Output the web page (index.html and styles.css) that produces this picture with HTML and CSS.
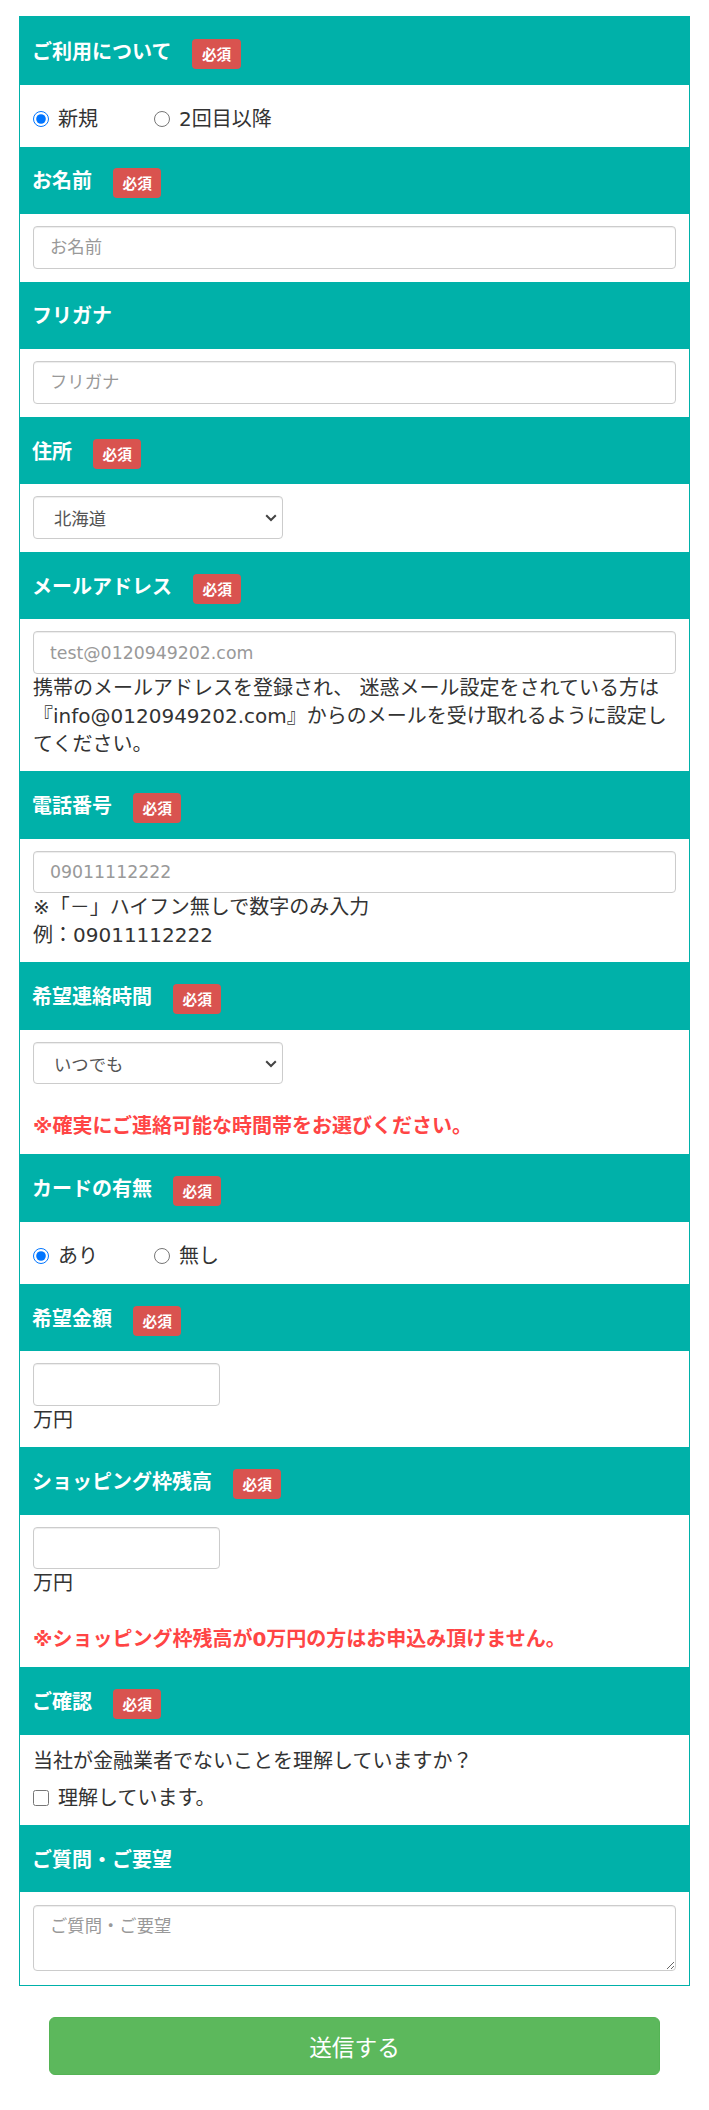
FILE: index.html
```html
<!DOCTYPE html>
<html lang="ja">
<head>
<meta charset="utf-8">
<title>お問い合わせフォーム</title>
<link rel="stylesheet" href="styles.css">
</head>
<body>
<form class="form-page">
  <div class="form-box">
    <div class="sec-head"><span>ご利用について</span><span class="badge">必須</span></div>
    <div class="sec-body">
      <div class="choices">
        <label class="choice"><input type="radio" name="use" checked>新規</label>
        <label class="choice"><input type="radio" name="use">2回目以降</label>
      </div>
    </div>

    <div class="sec-head"><span>お名前</span><span class="badge">必須</span></div>
    <div class="sec-body">
      <input class="field" type="text" placeholder="お名前">
    </div>

    <div class="sec-head"><span>フリガナ</span></div>
    <div class="sec-body">
      <input class="field" type="text" placeholder="フリガナ">
    </div>

    <div class="sec-head"><span>住所</span><span class="badge">必須</span></div>
    <div class="sec-body">
      <div class="select-wrap">
        <select class="field select"><option>北海道</option></select>
        <svg class="chev" width="12" height="8" viewBox="0 0 12 8"><path d="M1.2 1.2 L6 6 L10.8 1.2" fill="none" stroke="#444" stroke-width="2"/></svg>
      </div>
    </div>

    <div class="sec-head"><span>メールアドレス</span><span class="badge">必須</span></div>
    <div class="sec-body">
      <input class="field" type="text" placeholder="test@0120949202.com">
      <p class="note">携帯のメールアドレスを登録され、 迷惑メール設定をされている方は『info@0120949202.com』からのメールを受け取れるように設定してください。</p>
    </div>

    <div class="sec-head"><span>電話番号</span><span class="badge">必須</span></div>
    <div class="sec-body">
      <input class="field" type="text" placeholder="09011112222">
      <p class="note">※「－」ハイフン無しで数字のみ入力<br>例：09011112222</p>
    </div>

    <div class="sec-head"><span>希望連絡時間</span><span class="badge">必須</span></div>
    <div class="sec-body">
      <div class="select-wrap">
        <select class="field select"><option>いつでも</option></select>
        <svg class="chev" width="12" height="8" viewBox="0 0 12 8"><path d="M1.2 1.2 L6 6 L10.8 1.2" fill="none" stroke="#444" stroke-width="2"/></svg>
      </div>
      <p class="note-red">※確実にご連絡可能な時間帯をお選びください。</p>
    </div>

    <div class="sec-head"><span>カードの有無</span><span class="badge">必須</span></div>
    <div class="sec-body">
      <div class="choices">
        <label class="choice"><input type="radio" name="card" checked>あり</label>
        <label class="choice"><input type="radio" name="card">無し</label>
      </div>
    </div>

    <div class="sec-head"><span>希望金額</span><span class="badge">必須</span></div>
    <div class="sec-body">
      <input class="field field-sm" type="text">
      <p class="note">万円</p>
    </div>

    <div class="sec-head"><span>ショッピング枠残高</span><span class="badge">必須</span></div>
    <div class="sec-body">
      <input class="field field-sm" type="text">
      <p class="note">万円</p>
      <p class="note-red">※ショッピング枠残高が0万円の方はお申込み頂けません。</p>
    </div>

    <div class="sec-head"><span>ご確認</span><span class="badge">必須</span></div>
    <div class="sec-body">
      <p class="note">当社が金融業者でないことを理解していますか？</p>
      <label class="check"><input type="checkbox">理解しています。</label>
    </div>

    <div class="sec-head"><span>ご質問・ご要望</span></div>
    <div class="sec-body sec-body-last">
      <textarea class="field area" placeholder="ご質問・ご要望"></textarea>
    </div>
  </div>

  <button type="button" class="submit">送信する</button>
</form>
</body>
</html>
```

FILE: styles.css
```css
* {
  box-sizing: border-box;
}

body {
  margin: 0;
  background: #ffffff;
  color: #333333;
  font-family: "DejaVu Sans", "Noto Sans CJK JP", sans-serif;
  font-size: 20px;
  line-height: 28px;
}

.form-page {
  margin: 0;
  padding: 16px 19px 0;
}

.form-box {
  border: 1px solid #00b1a9;
}

.sec-head {
  display: flex;
  align-items: center;
  height: 67.5px;
  padding: 0 12px;
  background: #00b1a9;
  color: #ffffff;
  font-weight: bold;
  font-family: "Noto Sans CJK JP", sans-serif;
}

.badge {
  margin-left: 21px;
  margin-top: 6px;
  height: 30px;
  padding: 0 9.5px;
  border-radius: 4px;
  background: #d9534f;
  color: #ffffff;
  font-size: 14.67px;
  line-height: 30px;
  font-weight: bold;
}

.sec-body {
  padding: 12px 13px 13px;
  background: #ffffff;
}

.sec-body-last {
  padding: 13px 13px 14px;
}

.field {
  display: block;
  width: 100%;
  height: 42.67px;
  margin: 0;
  padding: 0 16px;
  border: 1px solid #cccccc;
  border-radius: 4px;
  box-shadow: inset 0 1px 1px rgba(0, 0, 0, 0.075);
  background: #ffffff;
  color: #555555;
  font-family: "DejaVu Sans", "Noto Sans CJK JP", sans-serif;
  font-size: 17.33px;
}

.field::placeholder {
  color: #999999;
}

.field-sm {
  width: 187px;
}

.select-wrap {
  position: relative;
  width: 250px;
}

.select {
  appearance: none;
  -webkit-appearance: none;
  padding-left: 20px;
  font-family: "Noto Sans CJK JP", sans-serif;
}

.chev {
  position: absolute;
  right: 6px;
  top: 18px;
  pointer-events: none;
}

.area {
  height: 66px;
  padding: 7px 16px;
  font-family: "Noto Sans CJK JP", sans-serif;
  font-size: 17.33px;
  line-height: 24px;
}

.note {
  margin: 0;
}

.note-red {
  margin: 27px 0 0;
  color: #ff4545;
  font-weight: bold;
  line-height: 30px;
}

.choices {
  display: flex;
  align-items: center;
  height: 29px;
  margin-top: 8px;
}

.choice {
  display: flex;
  align-items: center;
  margin-right: 56px;
}

.choice input,
.check input {
  width: 16px;
  height: 16px;
  margin: 0 9px 0 0;
}

.check {
  display: flex;
  align-items: center;
  height: 28px;
  margin-top: 9px;
}

.submit {
  display: block;
  width: 611px;
  height: 58px;
  margin: 31px auto 0;
  border: 1px solid #55b455;
  border-radius: 6px;
  background: #5cb85c;
  color: #ffffff;
  font-family: "Noto Sans CJK JP", sans-serif;
  font-size: 22.67px;
}
```
